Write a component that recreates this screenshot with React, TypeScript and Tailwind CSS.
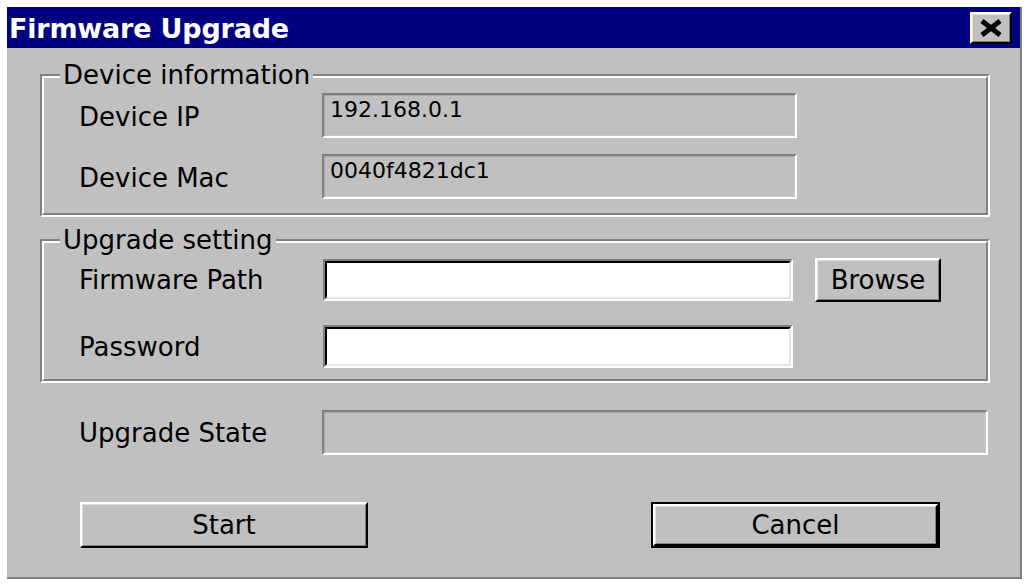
import React from "react";

function Sunken({ white, className, children }: { white?: boolean; className?: string; children?: React.ReactNode }) {
  return (
    <div className={"border-2 border-t-[#808080] border-l-[#808080] border-b-white border-r-white " + (className || "")}>
      <div
        className={
          "h-full w-full " +
          (white
            ? "bg-white border-2 border-t-black border-l-black border-b-[#e4e4e4] border-r-[#e4e4e4]"
            : "bg-[#c0c0c0] border border-t-[#a8a8a8] border-l-[#a8a8a8] border-b-[#c8c8c8] border-r-[#c8c8c8]")
        }
      >
        {children}
      </div>
    </div>
  );
}

function Raised({ className, children, def }: { className?: string; children?: React.ReactNode; def?: boolean }) {
  const inner = (
    <div className="h-full w-full bg-[#c0c0c0] border-2 border-t-white border-l-white border-b-black border-r-black">
      <div className="h-full w-full border border-t-[#e0e0e0] border-l-[#e0e0e0] border-b-[#808080] border-r-[#808080] flex items-center justify-center text-[26px] leading-none text-black">
        {children}
      </div>
    </div>
  );
  if (def) {
    return <div className={"border-2 border-black " + (className || "")}>{inner}</div>;
  }
  return <div className={className}>{inner}</div>;
}

function Group({ label, className, children }: { label: string; className?: string; children?: React.ReactNode }) {
  return (
    <div className={"relative border-2 border-t-[#808080] border-l-[#808080] border-b-white border-r-white " + (className || "")}>
      <div className="h-full w-full border-2 border-t-white border-l-white border-b-[#808080] border-r-[#808080]">
        {children}
      </div>
      <span className="absolute left-[18px] top-[-15px] px-[3px] bg-[#c0c0c0] text-[26px] leading-[28px] text-black whitespace-nowrap">
        {label}
      </span>
    </div>
  );
}

export default function App() {
  return (
    <div className="w-[1029px] h-[584px] bg-white pt-[7px] pl-[7px] font-['DejaVu_Sans',sans-serif] overflow-hidden">
      <div className="w-[1015px] h-[572px] bg-[#c0c0c0] border-r-2 border-b-2 border-r-[#808080] border-b-[#808080] flex flex-col">
        {/* Title bar */}
        <div className="h-[41px] shrink-0 bg-[#000080] flex items-center justify-between pl-[2px] pr-[8px]">
          <span className="text-white font-bold text-[27px] leading-none mt-[2px] whitespace-nowrap tracking-[-0.2px]">Firmware Upgrade</span>
          <Raised className="w-[42px] h-[32px] mt-[1px]">
            <svg width="24" height="18" viewBox="0 0 24 18">
              <line x1="3" y1="2" x2="21" y2="16" stroke="black" strokeWidth="5" />
              <line x1="21" y1="2" x2="3" y2="16" stroke="black" strokeWidth="5" />
            </svg>
          </Raised>
        </div>

        {/* Body */}
        <div className="flex flex-col pl-[33px] text-[26px] text-black">
          <Group label="Device information" className="mt-[26px] w-[950px] h-[143px]">
            <div className="flex flex-col pt-[15px] pl-[35px] gap-[16px]">
              <div className="flex items-center">
                <span className="w-[243px] leading-none mt-[3px]">Device IP</span>
                <Sunken className="w-[475px] h-[45px]">
                  <div className="pl-[5px] pt-[3px] text-[22px] leading-none">192.168.0.1</div>
                </Sunken>
              </div>
              <div className="flex items-center">
                <span className="w-[243px] leading-none mt-[3px]">Device Mac</span>
                <Sunken className="w-[475px] h-[45px]">
                  <div className="pl-[5px] pt-[3px] text-[22px] leading-none">0040f4821dc1</div>
                </Sunken>
              </div>
            </div>
          </Group>

          <Group label="Upgrade setting" className="mt-[22px] w-[950px] h-[144px]">
            <div className="flex flex-col pt-[15px] pl-[35px] gap-[23px]">
              <div className="flex items-center">
                <span className="w-[244px] leading-none">Firmware Path</span>
                <Sunken white className="w-[470px] h-[42px]" />
                <Raised className="ml-[22px] w-[126px] h-[44px]">Browse</Raised>
              </div>
              <div className="flex items-center">
                <span className="w-[244px] leading-none">Password</span>
                <Sunken white className="w-[470px] h-[43px]" />
              </div>
            </div>
          </Group>

          <div className="mt-[27px] flex items-center pl-[39px]">
            <span className="w-[243px] leading-none">Upgrade State</span>
            <Sunken className="w-[666px] h-[45px]" />
          </div>

          <div className="mt-[47px] flex items-center pl-[40px]">
            <Raised className="w-[288px] h-[46px]">Start</Raised>
            <Raised def className="ml-[283px] w-[289px] h-[46px]">Cancel</Raised>
          </div>
        </div>
      </div>
    </div>
  );
}
